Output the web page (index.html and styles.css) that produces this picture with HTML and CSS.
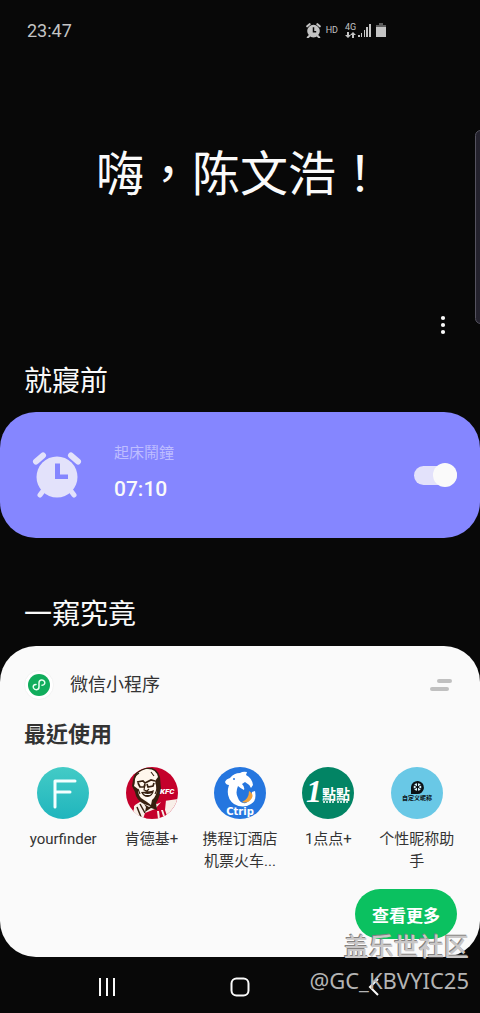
FILE: index.html
```html
<!DOCTYPE html>
<html lang="zh-Hant">
<head>
<meta charset="utf-8">
<meta name="viewport" content="width=device-width, initial-scale=1">
<title>嗨，陈文浩！</title>
<link rel="stylesheet" href="styles.css">
</head>
<body>
<div class="screen">
  <header class="status">
    <time class="clock">23:47</time>
    <div class="indicators">
      <svg width="15" height="15" viewBox="0 0 50 50" fill="#c4c4c4" aria-hidden="true">
        <circle cx="25" cy="27" r="21"/>
        <path d="M4 11L12 4M46 11L38 4M11 43L6 48M39 43L44 48" stroke="#c4c4c4" stroke-width="7" stroke-linecap="round"/>
        <path d="M25 14V29H34" fill="none" stroke="#080808" stroke-width="5"/>
      </svg>
      <span class="hd">HD</span>
      <div class="network">
        <span class="gen">4G</span>
        <svg width="11" height="6" viewBox="0 0 11 6" fill="#c4c4c4" aria-hidden="true">
          <path d="M2 0H4V3H6L3 6L0 3H2ZM7 6H9V3H11L8 0L5 3H7Z"/>
        </svg>
      </div>
      <svg width="13" height="13" viewBox="0 0 13 13" fill="#c4c4c4" aria-hidden="true">
        <path d="M0 11H2V13H0ZM3 9H4V13H3ZM6 6H7V13H6ZM8 3H10V13H8ZM11 0H13V13H11Z"/>
      </svg>
      <svg class="battery" width="10" height="14" viewBox="0 0 10 14" aria-hidden="true">
        <path d="M3 0H7V2H10V4H0V2H3Z" fill="#5c5c5c"/><path d="M0 4H10V14H0Z" fill="#c4c4c4"/>
      </svg>
    </div>
  </header>

  <main class="content">
    <h1 class="greeting">嗨，陈文浩！</h1>
    <div class="tools">
      <button class="more" type="button" aria-label="更多選項">
        <svg width="6" height="20" viewBox="0 0 6 20" fill="#fafafa"><circle cx="3" cy="3" r="2.1"/><circle cx="3" cy="10" r="2.1"/><circle cx="3" cy="17" r="2.1"/></svg>
      </button>
    </div>

    <h2 class="heading">就寢前</h2>
    <section class="alarm">
      <svg class="alarm-icon" width="50" height="48" viewBox="0 0 50 48" aria-hidden="true">
        <g stroke="#e3e2fb" stroke-linecap="round" stroke-width="6">
          <path d="M4 10.500L11 4.500M46 10.500L39 4.500"/>
          <path d="M11 40L8 44M39 40L42 44" stroke-width="5"/>
        </g>
        <circle cx="25" cy="26" r="20.500" fill="#e3e2fb"/>
        <path d="M23 12.500H28V23.500H36V28H23Z" fill="#8586ff"/>
      </svg>
      <div class="alarm-text">
        <label class="alarm-label" for="alarm-switch">起床鬧鐘</label>
        <time class="alarm-time">07:10</time>
      </div>
      <input class="switch" id="alarm-switch" type="checkbox" role="switch" checked>
    </section>

    <h2 class="heading heading-second">一窺究竟</h2>
    <section class="apps">
      <div class="apps-head">
        <svg class="mini" width="30" height="30" viewBox="0 0 30 30" aria-hidden="true">
          <circle cx="15" cy="15" r="14.500" fill="#fff" stroke="#f3f3f3"/>
          <circle cx="15" cy="15" r="11" fill="#10ad5c"/>
          <path d="M12 14.500C9.500 14.500 8.800 16 9.500 18C10.500 20.200 15 20.500 15 17V13C15 9.500 19 9.300 20.500 11.500C21.500 13.500 20 15.300 18 15.300" fill="none" stroke="#e8fff1" stroke-width="1.500" stroke-linecap="round"/>
        </svg>
        <span class="apps-name">微信小程序</span>
        <svg width="22" height="12" viewBox="0 0 22 12" aria-hidden="true"><path d="M9 2H20M2 10H17" stroke="#c0c0c0" stroke-width="4" stroke-linecap="round"/></svg>
      </div>
      <h3 class="recent">最近使用</h3>
      <div class="grid">
        <a class="app" href="#">
          <svg width="52" height="52" viewBox="0 0 52 52" aria-hidden="true">
            <defs><linearGradient id="teal" x1="0" y1="0" x2="0" y2="1"><stop offset="0" stop-color="#43cbc6"/><stop offset="1" stop-color="#20b5bd"/></linearGradient></defs>
            <circle cx="26" cy="26" r="26" fill="url(#teal)"/>
            <path d="M18 40V14H38M18 25H33" fill="none" stroke="#f4ffff" stroke-width="3" stroke-linecap="round" stroke-linejoin="round"/>
          </svg>
          <span>yourfinder</span>
        </a>
        <a class="app" href="#">
          <svg width="52" height="52" viewBox="0 0 52 52" aria-hidden="true">
            <defs><clipPath id="disc"><circle cx="26" cy="26" r="26"/></clipPath></defs>
            <g clip-path="url(#disc)">
              <path d="M0 0H52V52H0Z" fill="#c4002b"/>
              <path d="M9 38L17 33L31 37L38 34L52 32V52H5Z" fill="#f8efe8"/>
              <path d="M8 39L17 35L21 44L18 52H8Z" fill="#f8efe8"/>
              <path d="M11 40L15 50M14 37L19 46" stroke="#36200f" stroke-width="1.500"/>
              <path d="M19 46L29 42L36 34L40 33L39 43L42 52H17Z" fill="#c4002b"/>
              <path d="M31 44H33L34 52H32ZM35 43H37L40 52H38Z" fill="#f8efe8"/>
              <path d="M7 13Q8 4 19 1Q31 -1 34 10L35 22Q33 34 27 40L18 37Q10 33 9 25L6 19Z" fill="#36200f"/>
              <path d="M9 12Q11 4 20 2Q30 1 32 10L29 14L31 21Q31 29 26 33L25 38L21 35L15 31Q12 28 12 22L8 19Q9 16 9 12Z" fill="#fff7ec"/>
              <path d="M11 15L17 14L19 16L25 13L29 14M12 16L14 20L18 20L19 17M21 17L22 20L27 19L28 16" fill="none" stroke="#36200f" stroke-width="1.700"/>
              <path d="M19 18L18 23L21 24L23 22M9 9L13 6M25 5L28 9M30 16Q32 22 29 27M12 22L14 27" fill="none" stroke="#36200f" stroke-width="1.100"/>
              <path d="M15 25Q19 25 21 24Q24 25 28 23Q27 29 22 30Q17 30 15 25Z" fill="#36200f"/>
              <path d="M17 26Q22 28 26 26L24 28H19Z" fill="#fff"/>
              <path d="M20 31L22 30L25 31L23 36Z" fill="#fff"/>
              <path d="M18 37L23 40L30 36L31 43L25 41L19 45L20 40Z" fill="#36200f"/>
            </g>
            <text class="kfc" x="34" y="27">KFC</text>
          </svg>
          <span lang="zh-Hans">肯德基+</span>
        </a>
        <a class="app" href="#">
          <svg width="52" height="52" viewBox="0 0 52 52" aria-hidden="true">
            <circle cx="26" cy="26" r="26" fill="#2576df"/>
            <path d="M11 15Q12 12 16 11Q20 6 26 6Q29 4 33 5L32 8Q38 11 39 18L37 21Q35 17 31 15L28 17Q31 20 30 23Q26 21 24 19Q21 26 24 31Q26 37 32 36Q38 33 38 25L41 24Q43 34 37 37Q29 42 20 37Q11 30 15 18Q12 18 11 15Z" fill="#fff"/>
            <path d="M35 24Q40 27 38 31Q34 37 28 35Q35 32 35 24Z" fill="#f2a33c"/>
            <circle cx="20" cy="12" r="1" fill="#2576df"/>
            <text class="ctrip" x="26" y="48" text-anchor="middle">Ctrip</text>
          </svg>
          <span lang="zh-Hans">携程订酒店机票火车...</span>
        </a>
        <a class="app" href="#">
          <svg width="52" height="52" viewBox="0 0 52 52" aria-hidden="true">
            <circle cx="26" cy="26" r="26" fill="#028464"/>
            <text class="one" x="4" y="35">1</text>
            <text class="dian" x="20" y="32">點點</text>
            <path d="M21 35H33M35 35H47" stroke="#fff" stroke-width="1.500" stroke-dasharray="2 1"/>
          </svg>
          <span lang="zh-Hans">1点点+</span>
        </a>
        <a class="app" href="#">
          <svg width="52" height="52" viewBox="0 0 52 52" aria-hidden="true">
            <circle cx="26" cy="26" r="26" fill="#69c8e6"/>
            <path d="M20 27V20A6.500 6.500 0 1 1 26 27Z" fill="#0b1115"/>
            <circle cx="26.500" cy="20" r="3.800" fill="#d7f3fb"/>
            <path d="M26.500 16V24M23 18L30 22M30 18L23 22" stroke="#0b1115" stroke-width="1"/>
            <text class="custom" x="26" y="33" text-anchor="middle">自定义昵称</text>
          </svg>
          <span lang="zh-Hans">个性昵称助手</span>
        </a>
      </div>
      <button class="view-more" type="button" lang="zh-Hans">查看更多</button>
    </section>
  </main>

  <nav class="nav" aria-label="導覽列">
    <button type="button" aria-label="最近"><svg width="18" height="20" viewBox="0 0 18 20"><path d="M2 1V19M9 1V19M16 1V19" stroke="#fafafa" stroke-width="2"/></svg></button>
    <button type="button" aria-label="首頁"><svg width="20" height="20" viewBox="0 0 20 20"><rect x="1.500" y="1.500" width="17" height="17" rx="5" fill="none" stroke="#fafafa" stroke-width="2"/></svg></button>
    <button type="button" aria-label="返回"><svg width="12" height="20" viewBox="0 0 12 20"><path d="M10 2L2 10L10 18" fill="none" stroke="#fafafa" stroke-width="2"/></svg></button>
  </nav>

  <div class="edge-handle"></div>
  <div class="watermark" lang="zh-Hans">
    <span class="community">盖乐世社区</span>
    <span class="user">@GC_KBVYIC25</span>
  </div>
</div>
</body>
</html>
```
FILE: styles.css
```css
* { box-sizing: border-box; }

body {
  margin: 0;
  background: #080808;
  color: #fafafa;
  font-family: Roboto, "Noto Sans CJK TC", sans-serif;
}

[lang="zh-Hans"] { font-family: Roboto, "Noto Sans CJK SC", sans-serif; }

h1, h2, h3 { margin: 0; font-weight: 400; }

button {
  padding: 0;
  border: 0;
  background: none;
  color: inherit;
  font: inherit;
}

svg { display: block; flex: none; }

.screen {
  position: relative;
  display: flex;
  flex-direction: column;
  min-height: 100vh;
  overflow: hidden;
}

.status {
  display: flex;
  align-items: center;
  justify-content: space-between;
  height: 60px;
  padding: 0 94px 0 27px;
  color: #c4c4c4;
}

.clock { font-size: 18px; }
.indicators { display: flex; align-items: center; }
.hd { margin: 0 6px 0 5px; font-size: 9px; }
.network { display: flex; flex-direction: column; align-items: center; width: 13px; margin-right: 1px; }
.gen { font-size: 9px; line-height: 9px; }
.battery { margin-left: 5px; }

.greeting {
  margin-top: 80px;
  font-size: 48px;
  line-height: 70px;
  text-align: center;
}

.tools {
  display: flex;
  justify-content: flex-end;
  margin-top: 95px;
  padding-right: 25px;
}

.more { display: grid; place-items: center; width: 24px; height: 40px; }

.heading {
  margin-top: 17px;
  padding: 0 24px;
  font-size: 28px;
  line-height: 40px;
}

.heading-second { margin-top: 57px; }

.alarm {
  display: flex;
  align-items: center;
  min-height: 126px;
  margin-top: 10px;
  padding: 0 23px 0 32px;
  border-radius: 36px;
  background: #8586ff;
}

.alarm-text {
  display: flex;
  flex: 1;
  flex-direction: column;
  gap: 10px;
  margin-left: 32px;
  padding-bottom: 6px;
}

.alarm-label { color: #bebdff; font-size: 15px; line-height: 24px; }
.alarm-time { font-size: 21px; font-weight: 500; line-height: 28px; }

.switch {
  display: flex;
  align-items: center;
  justify-content: flex-end;
  width: 43px;
  height: 19px;
  margin: 0;
  border-radius: 10px;
  background: #e3e2fb;
  appearance: none;
}

.switch::before {
  flex: none;
  width: 24px;
  height: 24px;
  border-radius: 50%;
  background: #fafafa;
  content: "";
}

.switch:not(:checked) { justify-content: flex-start; }

.apps {
  display: flex;
  flex-direction: column;
  margin-top: 11px;
  padding: 24px 0 18px;
  border-radius: 36px;
  background: #fafafa;
  color: #333;
}

.apps-head { display: flex; align-items: center; padding: 0 28px 0 24px; }
.apps-name { flex: 1; margin-left: 16px; font-size: 18px; line-height: 30px; }

.recent {
  margin-top: 20px;
  padding: 0 24px;
  font-size: 22px;
  font-weight: 700;
  line-height: 30px;
}

.grid {
  display: grid;
  grid-template-columns: repeat(5, 1fr);
  margin-top: 17px;
  padding: 0 19px;
}

.app {
  display: flex;
  flex-direction: column;
  align-items: center;
  gap: 9px;
  padding: 0 6px;
  color: inherit;
  font-size: 15px;
  line-height: 22px;
  text-align: center;
  text-decoration: none;
}

.kfc { fill: #fff; font: italic 900 8px Roboto, sans-serif; }
.ctrip { fill: #fff; font: 700 10px "DejaVu Sans", sans-serif; }
.one { fill: #fff; font: italic 700 32px "Liberation Serif", serif; }
.dian { fill: #fff; font: 700 14px "Noto Sans CJK TC", sans-serif; }
.custom { fill: #0b1115; font: 700 6px "Noto Sans CJK SC", sans-serif; }

.view-more {
  align-self: flex-end;
  height: 50px;
  margin: 17px 23px 0 0;
  padding: 0 17px;
  border-radius: 25px;
  background: #0bc160;
  color: #fff;
  font-size: 17px;
  font-weight: 700;
}

.nav {
  display: grid;
  grid-template-columns: repeat(3, 1fr);
  flex: 1;
  min-height: 55px;
  padding: 4px 39px 0 40px;
}

.nav button { display: grid; place-items: center; }

.edge-handle {
  position: absolute;
  top: 130px;
  right: -6px;
  width: 11px;
  height: 194px;
  border: 1px solid #55535f;
  border-radius: 6px;
  background: #24222d;
}

.watermark {
  position: absolute;
  right: 11px;
  bottom: 17px;
  display: flex;
  flex-direction: column;
  align-items: flex-end;
  color: #b4b4b4;
  line-height: 32px;
  pointer-events: none;
}

.community {
  color: #c9c7c7;
  font-size: 25px;
  font-weight: 500;
  text-shadow: -1px -1px 0 #858280;
}

.user { font-family: "Noto Sans", sans-serif; font-size: 22px; }
```
